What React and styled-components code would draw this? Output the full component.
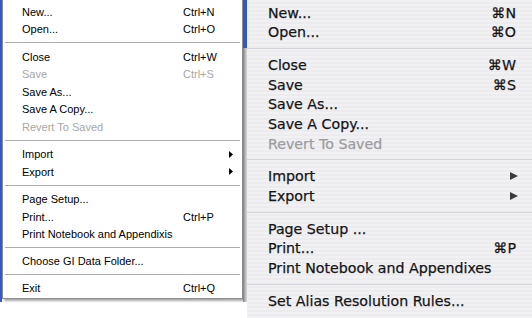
import React from 'react';
import styled, { createGlobalStyle } from 'styled-components';

const GlobalStyle = createGlobalStyle`
  body{
    margin:0;
    background:#fff;
  }
`

const Stage = styled.div`
  display:flex;
  width:532px;
  height:318px;
  overflow:hidden;
  background:#fff;
`

// left half: the Windows XP style menu
const WinSide = styled.div`
  display:flex;
  align-items:flex-start;
  width:247px;
  flex:none;
`
const WinFrameEdge = styled.div`
  width:2px;
  height:302px;
  background:#3458cc;
`
const WinMenu = styled.div`
  width:241px;
  box-sizing:border-box;
  background:#fff;
  border:1px solid #8d8d8d;
  border-top:none;
  padding:3px 0 1px;
  box-shadow:2px 2px 2px rgba(0,0,0,.35);
  font-family:"Liberation Sans", Arial, sans-serif;
  font-size:11px;
`
const WinItem = styled.div`
  display:grid;
  grid-template-columns:1fr 50px;
  align-items:center;
  height:17.6px;
  padding:0 9px 0 19px;
  color:${p => p.$disabled ? '#a8a7a2' : '#000'};
  white-space:nowrap;
`
const WinSep = styled.div`
  display:flex;
  align-items:center;
  height:9.6px;
  margin:0 2px;
  &::before{
    content:'';
    flex:1;
    height:1px;
    background:#adadad;
  }
`
const WinArrow = styled.svg`
  justify-self:end;
  width:4px;
  height:7px;
`
const Gutter = styled.div`
  width:4px;
  height:302px;
  background:
    linear-gradient(to bottom, #3356c9 0 48px, transparent 48px),
    linear-gradient(to right, #7a7a7a, #b4b4b4 50%, #d6d6d6);
`

// right half: the Aqua menu
const MacMenu = styled.div`
  flex:1;
  padding-top:3px;
  background:repeating-linear-gradient(to bottom, #f1f1f3 0 2px, #ececef 2px 4px);
  font-family:"DejaVu Sans", Verdana, sans-serif;
  font-size:14.2px;
  -webkit-text-stroke:0.25px;
`
const MacItem = styled.div`
  display:flex;
  align-items:center;
  justify-content:space-between;
  height:19.6px;
  padding:0 16px 0 21px;
  color:${p => p.$disabled ? '#9d9d9f' : '#151515'};
  white-space:nowrap;
`
const MacSep = styled.div`
  display:flex;
  align-items:center;
  height:13.2px;
  &::before{
    content:'';
    flex:1;
    height:1px;
    background:#d4d4d8;
  }
`
const MacArrow = styled.span`
  width:0;
  height:0;
  margin-right:-2px;
  border-left:8px solid #3a3a3a;
  border-top:4.5px solid transparent;
  border-bottom:4.5px solid transparent;
`

const winItems = [
  {label:'New...', key:'Ctrl+N'},
  {label:'Open...', key:'Ctrl+O'},
  'sep',
  {label:'Close', key:'Ctrl+W'},
  {label:'Save', key:'Ctrl+S', disabled:true},
  {label:'Save As...'},
  {label:'Save A Copy...'},
  {label:'Revert To Saved', disabled:true},
  'sep',
  {label:'Import', sub:true},
  {label:'Export', sub:true},
  'sep',
  {label:'Page Setup...'},
  {label:'Print...', key:'Ctrl+P'},
  {label:'Print Notebook and Appendixis'},
  'sep',
  {label:'Choose GI Data Folder...'},
  'sep',
  {label:'Exit', key:'Ctrl+Q'},
]

const macItems = [
  {label:'New...', key:'⌘N'},
  {label:'Open...', key:'⌘O'},
  'sep',
  {label:'Close', key:'⌘W'},
  {label:'Save', key:'⌘S'},
  {label:'Save As...'},
  {label:'Save A Copy...'},
  {label:'Revert To Saved', disabled:true},
  'sep',
  {label:'Import', sub:true},
  {label:'Export', sub:true},
  'sep',
  {label:'Page Setup ...'},
  {label:'Print...', key:'⌘P'},
  {label:'Print Notebook and Appendixes'},
  'sep',
  {label:'Set Alias Resolution Rules...'},
]

export default function App(){
  return (
    <>
      <GlobalStyle />
      <Stage>
        <WinSide>
          <WinFrameEdge />
          <WinMenu>
            {winItems.map((it, i) => it === 'sep' ? <WinSep key={i} /> : (
              <WinItem key={i} $disabled={it.disabled}>
                <span>{it.label}</span>
                {it.sub ? (
                  <WinArrow viewBox="0 0 4 7"><path d="M0 0 L4 3.5 L0 7 Z" fill="#000" /></WinArrow>
                ) : <span>{it.key}</span>}
              </WinItem>
            ))}
          </WinMenu>
          <Gutter />
        </WinSide>
        <MacMenu>
          {macItems.map((it, i) => it === 'sep' ? <MacSep key={i} /> : (
            <MacItem key={i} $disabled={it.disabled}>
              <span>{it.label}</span>
              {it.sub ? <MacArrow /> : <span>{it.key}</span>}
            </MacItem>
          ))}
        </MacMenu>
      </Stage>
    </>
  );
}
